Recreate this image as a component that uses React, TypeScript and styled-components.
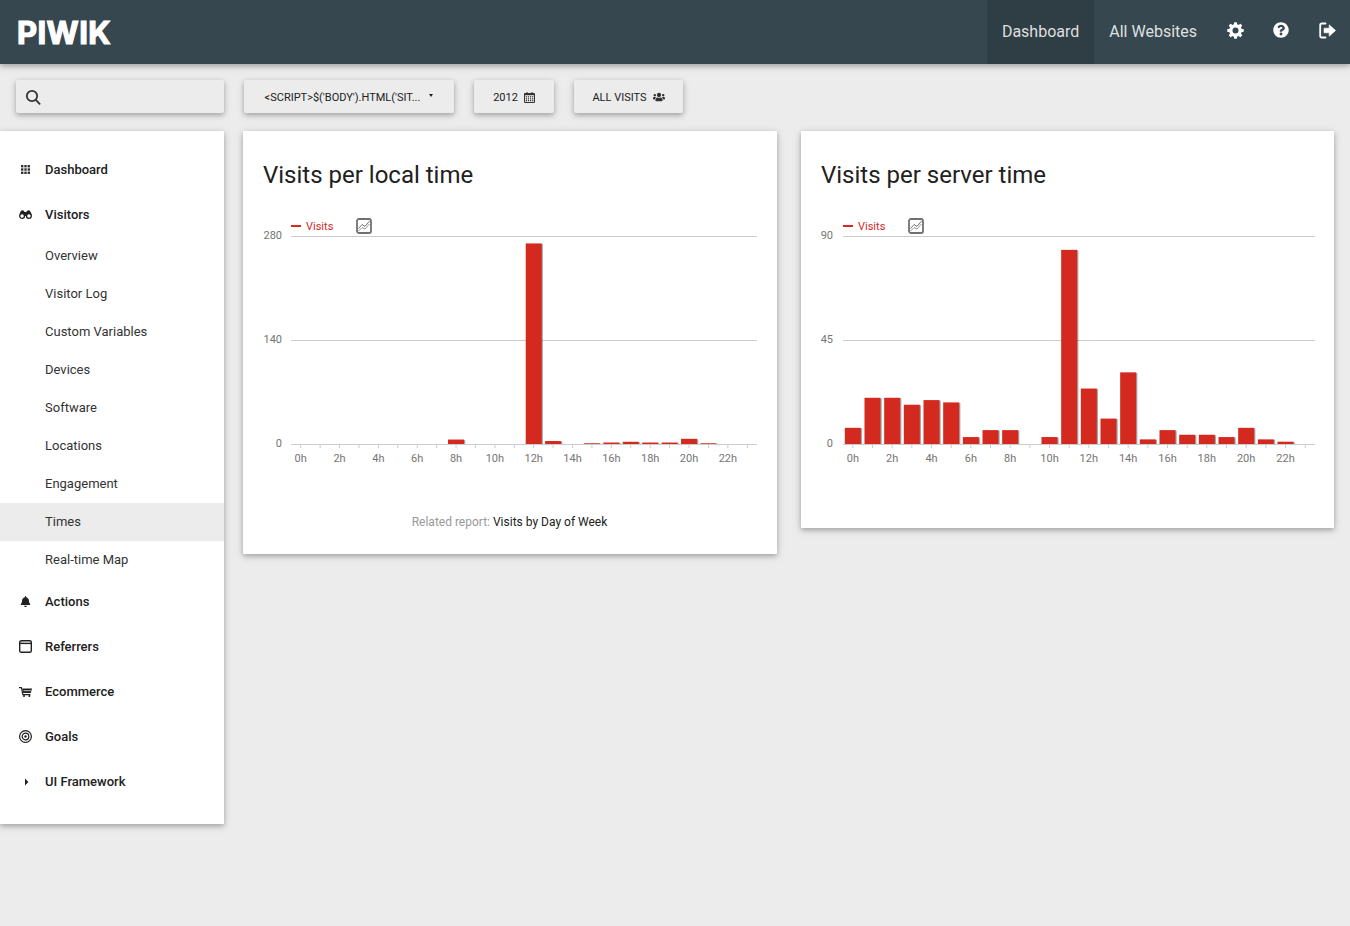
import { ReactNode } from "react";
import { createGlobalStyle, styled } from "styled-components";
import { FaBell, FaQuestionCircle, FaUsers } from "react-icons/fa";

const GlobalStyle = createGlobalStyle`
  html, body {
    margin: 0;
    padding: 0;
    background: #ececec;
    font-family: Roboto, "Liberation Sans", sans-serif;
    color: #212121;
  }
  #root { min-height: 100vh; }
  * { box-sizing: border-box; }
`;

const GridIcon = () => (
  <svg width="9" height="9" viewBox="0 0 9 9" fill="#333">
    {[0, 3.3, 6.6].flatMap((y) =>
      [0, 3.3, 6.6].map((x) => <rect key={`${x}-${y}`} x={x} y={y} width="2.4" height="2.4" />)
    )}
  </svg>
);

const BinocularsIcon = () => (
  <svg width="13" height="9" viewBox="0 0 13 9">
    <path d="M0.6 4 Q1.6 0.2 3.4 0.2 Q5.2 0.2 5.6 2 H7.4 Q7.8 0.2 9.6 0.2 Q11.4 0.2 12.4 4 L12 6 H1Z" fill="#212121" />
    <circle cx="3.1" cy="5.9" r="2.4" fill="#fff" stroke="#212121" strokeWidth="1.3" />
    <circle cx="9.9" cy="5.9" r="2.4" fill="#fff" stroke="#212121" strokeWidth="1.3" />
  </svg>
);

const WindowIcon = () => (
  <svg width="13" height="13" viewBox="0 0 13 13" fill="none" stroke="#212121">
    <rect x="0.7" y="0.7" width="11.6" height="11.6" rx="1.6" strokeWidth="1.4" />
    <path d="M1 3.4 H12" strokeWidth="1.4" />
    <path d="M2 2 H3 M3.8 2 H4.8" stroke="#888" strokeWidth="0.8" />
  </svg>
);

const CartIcon = () => (
  <svg width="13" height="10" viewBox="0 0 13 10">
    <path d="M0 0.6 H2.4 L3.8 7.6 H11.4" fill="none" stroke="#212121" strokeWidth="1.1" />
    <path d="M3.2 1.6 H13 L11.8 6 H4Z" fill="#212121" />
    <path d="M4.6 3.7 H12" stroke="#fff" strokeWidth="0.7" />
    <circle cx="5" cy="9" r="1" fill="#212121" />
    <circle cx="10.4" cy="9" r="1" fill="#212121" />
  </svg>
);

const TargetIcon = () => (
  <svg width="13" height="13" viewBox="0 0 13 13" fill="none" stroke="#212121">
    <circle cx="6.5" cy="6.5" r="5.9" strokeWidth="1.2" />
    <circle cx="6.5" cy="6.5" r="3.3" strokeWidth="1.2" />
    <circle cx="6.5" cy="6.5" r="1.2" fill="#212121" stroke="none" />
  </svg>
);

const CaretIcon = () => (
  <svg width="13" height="8" viewBox="0 0 13 8">
    <path d="M6 0.4 L9.4 4 L6 7.6Z" fill="#212121" />
  </svg>
);

const SearchIcon = () => (
  <svg width="16" height="16" viewBox="0 0 16 16" fill="none" stroke="#333" strokeWidth="1.8">
    <circle cx="7" cy="7" r="5.2" />
    <path d="M10.8 10.8 L14.6 14.8" strokeLinecap="round" />
  </svg>
);

const CalendarIcon = () => (
  <svg width="11" height="11" viewBox="0 0 11 11">
    <path d="M2.5 0 H3.5 V1 H7.5 V0 H8.5 V1 H10 Q11 1 11 2 V10 Q11 11 10 11 H1 Q0 11 0 10 V2 Q0 1 1 1 H2.5Z" fill="#333" />
    <rect x="1" y="3.2" width="9" height="6.8" fill="#ececec" />
    {[1.8, 3.9, 6, 8.1].map((x) =>
      [4.2, 6.2, 8].map((y) => <rect key={`${x}-${y}`} x={x} y={y} width="1.2" height="1.2" fill="#333" />)
    )}
  </svg>
);

const GearIcon = () => (
  <svg width="17" height="17" viewBox="0 0 17 17">
    <circle cx="8.5" cy="8.5" r="4.7" fill="none" stroke="#fff" strokeWidth="3.4" />
    {[0, 45, 90, 135, 180, 225, 270, 315].map((a) => (
      <rect key={a} x="7" y="0.3" width="3" height="3" rx="0.6" fill="#fff" transform={`rotate(${a} 8.5 8.5)`} />
    ))}
  </svg>
);

const LogoutIcon = () => (
  <svg width="17" height="17" viewBox="0 0 17 17">
    <path d="M6.5 1.5 H3 Q1.2 1.5 1.2 3.3 V13.7 Q1.2 15.5 3 15.5 H6.5" fill="none" stroke="#fff" strokeWidth="1.8" strokeLinecap="round" />
    <path d="M10.2 2.8 L16.6 8.5 L10.2 14.2 V10.8 H5 V6.2 H10.2Z" fill="#fff" stroke="#fff" strokeWidth="0.6" strokeLinejoin="round" />
  </svg>
);

const ChartTypeIcon = ({ x, y }: { x: number; y: number }) => (
  <g transform={`translate(${x} ${y})`} fill="none">
    <rect x="1" y="1" width="14" height="14" rx="2" stroke="#707070" strokeWidth="1.8" />
    <path d="M2.5 10.5 L6 6.5 L9 8.5 L13.5 3" stroke="#777" strokeWidth="1" />
    <path d="M2.5 13 L6 9.5 L9 11 L13.5 6" stroke="#999" strokeWidth="1" />
  </g>
);

type ChartProps = {
  values: number[];
  max: number;
  labelRight: number;
  plotLeft: number;
};

const PLOT_RIGHT = 494;
const BASE_Y = 245;
const PLOT_H = 208;

const VisitsChart = ({ values, max, labelRight, plotLeft }: ChartProps) => {
  const step = (PLOT_RIGHT - plotLeft) / 24;
  const ticks = [max, max / 2, 0];

  return (
    <ChartSvg width="494" height="309" viewBox="0 0 494 309">
      <rect x={plotLeft} y="26" width="10" height="2" fill="#d4291f" />
      <LegendText x={plotLeft + 15} y="31">Visits</LegendText>
      <ChartTypeIcon x={plotLeft + 65} y={19} />

      {ticks.map((t, i) => {
        const y = 37 + (i * PLOT_H) / 2;
        return (
          <g key={t}>
            <line x1={plotLeft} x2={PLOT_RIGHT} y1={y + 0.5} y2={y + 0.5} stroke="#cccccc" />
            <AxisText x={labelRight} y={y + 3} textAnchor="end">{t}</AxisText>
          </g>
        );
      })}

      {values.map((v, i) => {
        const h = (v / max) * PLOT_H;
        const x = plotLeft + i * step + (step - 16) / 2;
        return (
          <g key={i}>
            <line
              x1={plotLeft + (i + 0.5) * step}
              x2={plotLeft + (i + 0.5) * step}
              y1={BASE_Y}
              y2={BASE_Y + 4}
              stroke="#cccccc"
            />
            {i % 2 === 0 && (
              <AxisText x={plotLeft + (i + 0.5) * step} y={BASE_Y + 18} textAnchor="middle">
                {`${i}h`}
              </AxisText>
            )}
            {v > 0 && (
              <>
                <rect x={x + 1.2} y={BASE_Y - h + 0.6} width="16" height={h - 0.6} fill="#000" opacity="0.35" />
                <rect x={x} y={BASE_Y - h} width="16" height={h} fill="#d4291f" />
              </>
            )}
          </g>
        );
      })}
    </ChartSvg>
  );
};

const localTime = [0, 0, 0, 0, 0, 0, 0, 0, 6, 0, 0, 0, 270, 4, 0, 1, 2, 3, 2, 2, 7, 1, 0, 0];
const serverTime = [7, 20, 20, 17, 19, 18, 3, 6, 6, 0, 3, 84, 24, 11, 31, 2, 6, 4, 4, 3, 7, 2, 1, 0];

const subItems = [
  "Overview",
  "Visitor Log",
  "Custom Variables",
  "Devices",
  "Software",
  "Locations",
  "Engagement",
  "Times",
  "Real-time Map",
];

const NavGroup = ({ icon, label }: { icon: ReactNode; label: string }) => (
  <GroupRow>
    <GroupIcon>{icon}</GroupIcon>
    {label}
  </GroupRow>
);

const App = () => (
  <>
    <GlobalStyle />
    <Header>
      <Logo>PIWIK</Logo>
      <TopNav>
        <TopLink $active>Dashboard</TopLink>
        <TopLink>All Websites</TopLink>
        <TopIcon><GearIcon /></TopIcon>
        <TopIcon><FaQuestionCircle size={16} /></TopIcon>
        <TopIcon><LogoutIcon /></TopIcon>
      </TopNav>
    </Header>

    <Toolbar>
      <SearchBox><SearchIcon /></SearchBox>
      <ToolButton $width={210}>
        &lt;SCRIPT&gt;$('BODY').HTML('SIT...
        <Caret />
      </ToolButton>
      <ToolButton $width={80}>
        2012
        <CalendarIcon />
      </ToolButton>
      <ToolButton $width={109}>
        ALL VISITS
        <FaUsers size={12} color="#333" />
      </ToolButton>
    </Toolbar>

    <Main>
      <Sidebar>
        <NavGroup icon={<GridIcon />} label="Dashboard" />
        <NavGroup icon={<BinocularsIcon />} label="Visitors" />
        <SubList>
          {subItems.map((s) => (
            <SubItem key={s} $active={s === "Times"}>{s}</SubItem>
          ))}
        </SubList>
        <NavGroup icon={<FaBell size={11} color="#212121" />} label="Actions" />
        <NavGroup icon={<WindowIcon />} label="Referrers" />
        <NavGroup icon={<CartIcon />} label="Ecommerce" />
        <NavGroup icon={<TargetIcon />} label="Goals" />
        <NavGroup icon={<CaretIcon />} label="UI Framework" />
      </Sidebar>

      <Cards>
        <Card $width={534}>
          <CardTitle>Visits per local time</CardTitle>
          <VisitsChart values={localTime} max={280} labelRight={19} plotLeft={28} />
          <Related>
            <RelatedLabel>Related report:</RelatedLabel> Visits by Day of Week
          </Related>
        </Card>
        <Card $width={533}>
          <CardTitle>Visits per server time</CardTitle>
          <VisitsChart values={serverTime} max={90} labelRight={12} plotLeft={22} />
        </Card>
      </Cards>
    </Main>
  </>
);

export default App;

const SHADOW = "0 2px 5px rgba(0, 0, 0, 0.26), 0 2px 10px rgba(0, 0, 0, 0.1)";

const Header = styled.header`
  height: 64px;
  background: #37474f;
  display: flex;
  align-items: center;
  justify-content: space-between;
  box-shadow: ${SHADOW};
  position: relative;
`;

const Logo = styled.div`
  margin: 1px 0 0 17px;
  font-family: Inter, "Open Sans", sans-serif;
  font-weight: 700;
  font-size: 31px;
  line-height: 64px;
  letter-spacing: 0.4px;
  color: #fff;
  -webkit-text-stroke: 1.2px #fff;
`;

const TopNav = styled.nav`
  display: flex;
  align-items: stretch;
  height: 64px;
`;

const TopLink = styled.a<{ $active?: boolean }>`
  display: flex;
  align-items: center;
  padding: 0 15px 2px;
  font-size: 16px;
  color: rgba(255, 255, 255, 0.85);
  background: ${(p) => (p.$active ? "#2f3d44" : "transparent")};
`;

const TopIcon = styled.a`
  display: flex;
  align-items: center;
  justify-content: center;
  width: 46px;
  padding-bottom: 4px;
  color: #fff;
`;

const Toolbar = styled.div`
  display: flex;
  gap: 20px;
  padding: 16px 0 18px 16px;
`;

const SearchBox = styled.div`
  width: 208px;
  height: 33px;
  padding-left: 9px;
  display: flex;
  align-items: center;
  background: #ececec;
  border-radius: 2px;
  box-shadow: ${SHADOW};
`;

const ToolButton = styled.div<{ $width: number }>`
  width: ${(p) => p.$width}px;
  height: 33px;
  padding-top: 1px;
  display: flex;
  align-items: center;
  justify-content: center;
  gap: 6px;
  font-size: 11px;
  color: #212121;
  background: #ececec;
  border-radius: 2px;
  box-shadow: ${SHADOW};
  white-space: nowrap;
`;

const Caret = styled.span`
  width: 0;
  height: 0;
  margin: -3px 0 0 3px;
  border-left: 2.5px solid transparent;
  border-right: 2.5px solid transparent;
  border-top: 3.5px solid #212121;
`;

const Main = styled.main`
  display: flex;
  gap: 19px;
  align-items: flex-start;
`;

const Sidebar = styled.aside`
  width: 224px;
  padding: 16px 0 20px;
  background: #fff;
  box-shadow: ${SHADOW};
`;

const GroupRow = styled.div`
  height: 45px;
  display: flex;
  align-items: center;
  font-size: 13px;
  font-weight: 500;
  color: #212121;
`;

const GroupIcon = styled.span`
  width: 45px;
  padding-left: 19px;
  padding-right: 13px;
  display: flex;
  align-items: center;
  justify-content: center;
`;

const SubList = styled.div`
  display: flex;
  flex-direction: column;
`;

const SubItem = styled.div<{ $active?: boolean }>`
  height: 38px;
  padding: 0 0 2px 45px;
  display: flex;
  align-items: center;
  font-size: 13px;
  color: #333;
  background: ${(p) => (p.$active ? "#ececec" : "transparent")};
`;

const Cards = styled.div`
  display: flex;
  gap: 24px;
  align-items: flex-start;
`;

const Card = styled.section<{ $width: number }>`
  width: ${(p) => p.$width}px;
  padding: 20px 19px 20px 20px;
  background: #fff;
  box-shadow: ${SHADOW};
`;

const CardTitle = styled.h2`
  margin: 0;
  font-size: 24px;
  font-weight: 400;
  line-height: 48px;
  color: #212121;
`;

const ChartSvg = styled.svg`
  display: block;
`;

const LegendText = styled.text`
  font-size: 11px;
  fill: #d4291f;
`;

const AxisText = styled.text`
  font-size: 11px;
  fill: #757575;
`;

const Related = styled.div`
  height: 26px;
  padding: 1px 2px 0 0;
  line-height: 26px;
  text-align: center;
  font-size: 12px;
  color: #212121;
`;

const RelatedLabel = styled.span`
  color: #999;
`;
